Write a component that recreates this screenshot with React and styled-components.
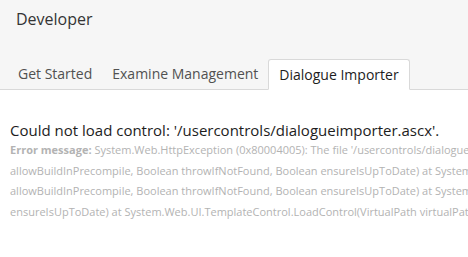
import React from 'react'
import styled, { createGlobalStyle } from 'styled-components'

const GlobalStyle = createGlobalStyle`
    html, body {
        margin: 0;
        padding: 0;
        background: #fff;
        font-family: "Open Sans", "Liberation Sans", sans-serif;
        overflow: hidden;
    }
`

const tabs = ['Get Started', 'Examine Management', 'Dialogue Importer']

const errorLines = [
    "System.Web.HttpException (0x80004005): The file '/usercontrols/dialogueimporter.ascx' does not exist. at System.Web.UI.Util.CheckVirtualFileExists(VirtualPath virtualPath) at System.Web.Compilation.BuildManager.GetVPathBuildResultInternal(VirtualPath virtualPath, Boolean noBuild, Boolean",
    'allowBuildInPrecompile, Boolean throwIfNotFound, Boolean ensureIsUpToDate) at System.Web.Compilation.BuildManager.GetVPathBuildResultWithNoAssert(HttpContext context, VirtualPath virtualPath, Boolean noBuild, Boolean',
    'allowBuildInPrecompile, Boolean throwIfNotFound, Boolean ensureIsUpToDate) at System.Web.Compilation.BuildManager.GetVirtualPathObjectFactory(VirtualPath virtualPath, HttpContext context, Boolean allowCrossApp, Boolean',
    'ensureIsUpToDate) at System.Web.UI.TemplateControl.LoadControl(VirtualPath virtualPath, Type t, Object[] parameters)',
]

function App() {
    return (
        <Page>
            <GlobalStyle />
            <Header>
                <Title>Developer</Title>
                <TabBar>
                    {tabs.map((t, i) => (
                        <Tab key={t} $active={i === tabs.length - 1}>{t}</Tab>
                    ))}
                </TabBar>
            </Header>
            <Content>
                <ErrorTitle>Could not load control: '/usercontrols/dialogueimporter.ascx'.</ErrorTitle>
                <ErrorBody>
                    {errorLines.map((line, i) => (
                        <Line key={i}>
                            {i === 0 && <strong>Error message: </strong>}
                            {line}
                        </Line>
                    ))}
                </ErrorBody>
            </Content>
        </Page>
    )
}

export default App

const Page = styled.div`
    width: 468px;
    height: 257px;
    overflow: hidden;
`

const Header = styled.div`
    background: #f6f6f6;
    border-bottom: 1px solid #d9d9d9;
    padding: 8px 0 0 8px;
    height: 81px;
    box-sizing: content-box;
    display: flex;
    flex-direction: column;
    justify-content: space-between;
`

const Title = styled.h1`
    margin: 0 0 0 8px;
    font-size: 16px;
    font-weight: 400;
    line-height: 22px;
    color: #343434;
`

const TabBar = styled.div`
    display: flex;
    margin-bottom: -1px;
`

const Tab = styled.div`
    height: 31px;
    box-sizing: border-box;
    padding: 0 ${p => (p.$active ? '10px' : '10px')};
    margin-left: ${p => (p.$active ? '0' : '0')};
    font-size: 14px;
    line-height: 30px;
    color: ${p => (p.$active ? '#1d1d1d' : '#515151')};
    background: ${p => (p.$active ? '#fff' : 'transparent')};
    border: ${p => (p.$active ? '1px solid #d9d9d9' : 'none')};
    border-bottom-color: #fff;
    border-radius: 3px 3px 0 0;
    white-space: nowrap;
`

const Content = styled.div`
    padding: 30px 10px 0 10px;
`

const ErrorTitle = styled.h3`
    margin: 0;
    font-size: 15px;
    font-weight: 400;
    line-height: 20px;
    color: #1d1d1d;
    white-space: nowrap;
`

const ErrorBody = styled.div`
    font-size: 11px;
    line-height: 20.7px;
    color: #b3b3b3;

    strong {
        font-weight: 700;
    }
`

const Line = styled.div`
    white-space: nowrap;
`
